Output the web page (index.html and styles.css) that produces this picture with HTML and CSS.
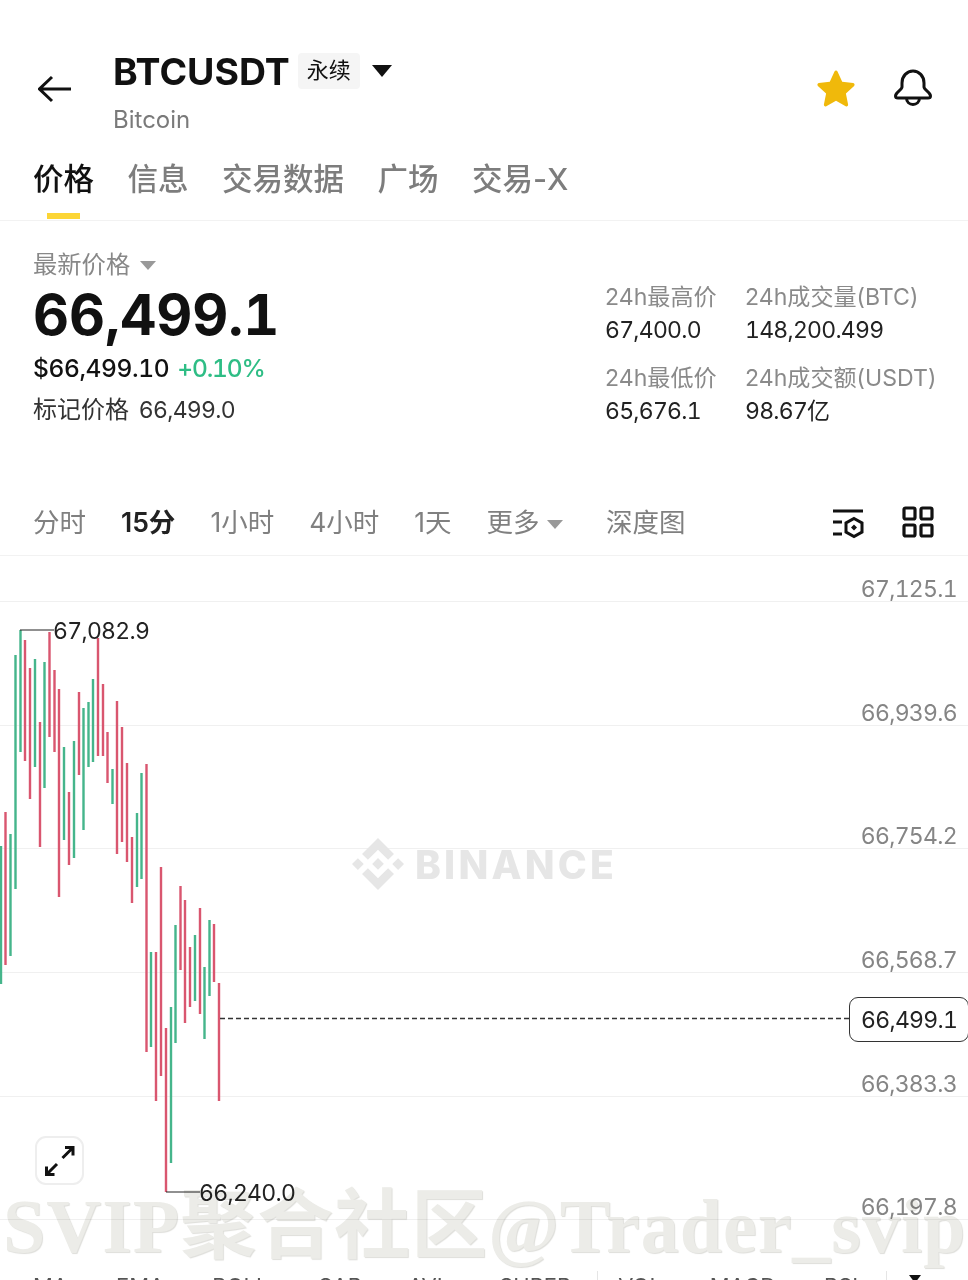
FILE: index.html
```html
<!DOCTYPE html>
<html lang="zh-CN">
<head>
    <meta charset="UTF-8">
    <meta name="viewport" content="width=device-width, initial-scale=1.0">
    <title>BTCUSDT 永续</title>
    <link rel="stylesheet" href="styles.css">
</head>
<body>
    <header class="top-bar">
        <svg class="back-icon" width="34" height="28" viewBox="0 0 34 28"><path d="M1.5 14H33M14 2 1.5 14 14 26"/></svg>
        <div class="symbol">
            <div class="symbol-row">
                <h1>BTCUSDT</h1>
                <span class="tag">永续</span>
                <span class="caret-big"></span>
            </div>
            <div class="symbol-name">Bitcoin</div>
        </div>
        <svg class="star-icon" width="40" height="38" viewBox="0 0 40 38"><path d="M20 1.5c.7 0 1.2.4 1.5 1l4.7 10.3 11 1.3c1.4.2 1.9 1.9.9 2.8l-8.2 7.6 2.2 11c.3 1.4-1.2 2.4-2.4 1.7L20 31.7l-9.7 5.5c-1.2.7-2.7-.3-2.4-1.7l2.2-11-8.2-7.6c-1-.9-.5-2.6.9-2.8l11-1.3 4.7-10.3c.3-.6.8-1 1.5-1z"/></svg>
        <svg class="bell-icon" width="38" height="38" viewBox="0 0 38 38"><path d="M8 18V14C8 7 13 2 19 2s11 5 11 12v4c0 3 6.5 5 6.5 9 0 1-1 2-2.5 2H4c-1.5 0-2.5-1-2.5-2 0-4 6.5-6 6.5-9zM12.500 29c0 4 3 6.5 6.5 6.5s6.5-2.5 6.5-6.5"/></svg>
    </header>

    <nav class="tabs">
        <a class="tab active">价格</a>
        <a class="tab">信息</a>
        <a class="tab">交易数据</a>
        <a class="tab">广场</a>
        <a class="tab">交易-X</a>
    </nav>

    <section class="stats">
        <div class="stats-left">
            <div class="latest-label">最新价格 <span class="caret"></span></div>
            <div class="price">66,499.1</div>
            <div class="price-sub">$66,499.10 <span class="up">+0.10%</span></div>
            <div class="mark">标记价格 <span>66,499.0</span></div>
        </div>
        <div class="stats-right">
            <div class="stat"><span>24h最高价</span><b>67,400.0</b></div>
            <div class="stat"><span>24h成交量(BTC)</span><b>148,200.499</b></div>
            <div class="stat"><span>24h最低价</span><b>65,676.1</b></div>
            <div class="stat"><span>24h成交额(USDT)</span><b>98.67亿</b></div>
        </div>
    </section>

    <div class="periods">
        <a class="period">分时</a>
        <a class="period active">15分</a>
        <a class="period">1小时</a>
        <a class="period">4小时</a>
        <a class="period">1天</a>
        <a class="period">更多 <span class="caret"></span></a>
        <a class="period depth">深度图</a>
        <svg class="opt-icon" width="32" height="36" viewBox="0 0 32 36"><path d="M0 4H30M0 15H9M0 27H9"/><path d="M21 11.5 29 16V25L21 29.5 13 25V16z"/><path class="dot" d="M21 17.5 24 20.5 21 23.5 18 20.5z"/></svg>
        <svg class="grid-icon" width="32" height="32" viewBox="0 0 32 32"><rect x="2" y="2" width="11" height="11" rx="1.5"/><rect x="19" y="2" width="11" height="11" rx="1.5"/><rect x="2" y="19" width="11" height="11" rx="1.5"/><rect x="19" y="19" width="11" height="11" rx="1.5"/></svg>
    </div>

    <section class="chart">
        <div class="axis-row first">67,125.1</div>
        <div class="axis-row">66,939.6</div>
        <div class="axis-row">66,754.2</div>
        <div class="axis-row">66,568.7</div>
        <div class="axis-row">66,383.3</div>
        <div class="axis-row">66,197.8</div>

        <div class="binance">
            <svg width="52" height="52" viewBox="0 0 126.61 126.61"><path d="M38.73 53.2 63.3 28.64l24.6 24.6 14.3-14.3L63.3 0 24.43 38.9zM0 63.31l14.3-14.3 14.3 14.3-14.3 14.3zM38.73 73.41 63.3 97.97l24.6-24.6 14.31 14.29-38.91 38.91-38.87-38.87zM98.01 63.31l14.3-14.3 14.3 14.3-14.3 14.3zM77.83 63.3 63.3 48.77 49.07 63.01l14.23 14.23 14.53-14.54z"/></svg>
            <span>BINANCE</span>
        </div>

        <svg class="candles" width="968" height="724" viewBox="0 556 968 724">
            <path class="wick green" d="M1 846V984M10.5 834V956M15.5 655V889M20.5 630V752M35 659V767M44.5 662V788M64 747V840M74 741V858M83.5 708V830M88.5 702V767M93 679V762M112.5 769V804M137 813V887M141.5 773V879M151 952V1047M171 1007V1163M175.5 925V1043M195 935V1001M204.5 967V1039M209.5 920V996"/>
            <path class="wick red" d="M5.5 812V965M25 640V761M30 668V799M40 722V847M49.5 632V737M54.5 670V752M59 689V897M69 792V865M79 692V775M98 638V756M103 684V756M107.5 732V783M117 701V854M122 727V842M127 763V862M132 837V903M146.5 764V1052M156 952V1101M161 867V1076M166 1028V1192M180.5 886V970M185 900V1023M190 947V1007M200 908V1014M214 924V982M219 983V1101"/>
            <path class="leader" d="M20 630H54M166 1192H200"/>
            <path class="last-line" d="M220 1018.5H849"/>
            <text x="53" y="639">67,082.9</text>
            <text x="199" y="1201">66,240.0</text>
        </svg>

        <div class="last-tag">66,499.1</div>
        <button class="expand">
            <svg width="30" height="30" viewBox="0 0 30 30"><path d="M17.5 12 28 1.5M20 1.5H28V9.5M12 18 1.5 28.5M1.5 20.5V28.5H9.5"/></svg>
        </button>

        <div class="indicators">
            <a class="ind i1">MA</a>
            <a class="ind i2">EMA</a>
            <a class="ind i3">BOLL</a>
            <a class="ind i4">SAR</a>
            <a class="ind i5">AVL</a>
            <a class="ind i6">SUPER</a>
            <i class="ind-sep s1"></i>
            <a class="ind i7">VOL</a>
            <a class="ind i8">MACD</a>
            <a class="ind i9">RSI</a>
            <i class="ind-sep s2"></i>
            <span class="ind-icon"></span>
        </div>
    </section>

    <div class="stamp">SVIP聚合社区@Trader_svip</div>
</body>
</html>
```

FILE: styles.css
```css
html, body {
    margin: 0;
    height: 1280px;
    overflow: hidden;
}
body {
    position: relative;
    background: #fff;
    color: #111;
    font-family: Inter, "Noto Sans CJK SC", sans-serif;
}
a {
    display: block;
}

/* top bar */
.top-bar {
    display: flex;
    align-items: flex-start;
    height: 149px;
}
.back-icon {
    flex: none;
    margin: 75px 0 0 38px;
    fill: none;
    stroke: #111;
    stroke-width: 3;
}
.symbol {
    flex: 1;
    margin: 49px 0 0 41px;
}
.symbol-row {
    display: flex;
    align-items: center;
    height: 44px;
}
.symbol-row h1 {
    margin: 0;
    font-size: 37.4px;
    font-weight: 700;
}
.tag {
    margin-left: 8px;
    padding: 0 9px;
    height: 36px;
    line-height: 35px;
    font-size: 22px;
    background: #f5f5f5;
    border-radius: 4px;
}
.caret-big {
    width: 0;
    height: 0;
    margin-left: 12px;
    border-left: 10px solid transparent;
    border-right: 10px solid transparent;
    border-top: 12px solid #111;
}
.symbol-name {
    margin-top: 12px;
    font-size: 24px;
    line-height: 30px;
    color: #7a7a7a;
}
.star-icon {
    flex: none;
    margin-top: 69px;
    fill: #f0b90b;
}
.bell-icon {
    flex: none;
    margin: 69px 36px 0 38px;
    fill: none;
    stroke: #111;
    stroke-width: 3;
}

/* tabs */
.tabs {
    display: flex;
    gap: 33.5px;
    height: 72px;
    padding-left: 33px;
    border-bottom: 1px solid #f2f2f2;
    box-sizing: border-box;
}
.tab {
    position: relative;
    font-size: 30.5px;
    line-height: 60px;
    color: #7d7d7d;
    font-weight: 500;
}
.tab.active {
    color: #111;
}
.tab.active::after {
    content: "";
    position: absolute;
    left: 14px;
    width: 33px;
    bottom: 1px;
    height: 6px;
    background: #fcd535;
}

/* price stats */
.stats {
    display: flex;
    justify-content: space-between;
    height: 260px;
    padding: 28px 0 0 33px;
    box-sizing: border-box;
}
.latest-label {
    font-size: 24.3px;
    line-height: 31px;
    color: #888;
}
.caret {
    display: inline-block;
    width: 0;
    height: 0;
    margin-left: 3px;
    vertical-align: 3px;
    border-left: 8px solid transparent;
    border-right: 8px solid transparent;
    border-top: 9px solid #999;
}
.price {
    margin-top: 2px;
    font-size: 55.8px;
    line-height: 66px;
    font-weight: 700;
    font-variant-numeric: tabular-nums;
}
.price-sub {
    margin-top: 3px;
    font-size: 24.5px;
    line-height: 34px;
    font-weight: 500;
    font-variant-numeric: tabular-nums;
    letter-spacing: -0.4px;
}
.up {
    margin-left: 2px;
    letter-spacing: -1.2px;
    color: #2ebd85;
}
.mark {
    margin-top: 9px;
    font-size: 24px;
    line-height: 32px;
    color: #333;
}
.mark span {
    margin-left: 3px;
    font-size: 23px;
    font-variant-numeric: tabular-nums;
    letter-spacing: -0.7px;
}
.stats-right {
    display: grid;
    grid-template-columns: 140px 223px;
    grid-auto-rows: 81px;
    margin-top: 32px;
}
.stat span {
    display: block;
    font-size: 23.1px;
    line-height: 32px;
    color: #8a8a8a;
}
.stat b {
    display: block;
    font-size: 23px;
    line-height: 34px;
    font-weight: 400;
    font-variant-numeric: tabular-nums;
    letter-spacing: -0.75px;
    color: #222;
}

/* period row */
.periods {
    display: flex;
    align-items: center;
    gap: 35px;
    height: 75px;
    padding: 4px 0 0 33px;
    border-bottom: 1px solid #f2f2f2;
    box-sizing: border-box;
    font-size: 26.5px;
    color: #808080;
}
.periods .active {
    color: #222;
    font-weight: 600;
}
.periods .caret {
    margin-left: 0;
}
.period {
    white-space: nowrap;
}
.period.depth {
    margin-left: 8px;
}
.opt-icon {
    margin: 10px 0 0 auto;
    fill: none;
    stroke: #111;
    stroke-width: 3;
}
.opt-icon .dot {
    fill: #111;
    stroke: none;
}
.grid-icon {
    margin: 4px 34px 0 2px;
    fill: none;
    stroke: #111;
    stroke-width: 3.2;
}

/* chart */
.chart {
    position: relative;
    height: 724px;
}
.axis-row {
    display: flex;
    align-items: flex-end;
    justify-content: flex-end;
    height: 123.7px;
    padding-right: 11px;
    border-bottom: 1px solid #f0f0f0;
    box-sizing: border-box;
    font-size: 23px;
    line-height: 23px;
    font-variant-numeric: tabular-nums;
    letter-spacing: -0.7px;
    color: #858585;
}
.axis-row.first {
    height: 46px;
}
.candles {
    position: absolute;
    top: 0;
    left: 0;
}
.candles text {
    font-size: 23px;
    font-variant-numeric: tabular-nums;
    letter-spacing: -0.7px;
    fill: #222;
}
.wick {
    fill: none;
    stroke-width: 2.4;
}
.wick.green {
    stroke: #45b58b;
}
.wick.red {
    stroke: #d9566f;
}
.leader {
    fill: none;
    stroke: #222;
    stroke-width: 1.2;
}
.last-line {
    fill: none;
    stroke: #333;
    stroke-width: 1.4;
    stroke-dasharray: 5 3;
}
.last-tag {
    position: absolute;
    top: 441px;
    right: -1px;
    width: 120px;
    height: 45px;
    padding-left: 11px;
    box-sizing: border-box;
    border: 1px solid #333;
    border-radius: 9px;
    background: #fff;
    font-size: 23px;
    line-height: 44px;
    font-variant-numeric: tabular-nums;
    letter-spacing: -0.7px;
    color: #222;
}
.expand {
    position: absolute;
    top: 580px;
    left: 35px;
    width: 49px;
    height: 49px;
    padding: 0;
    display: flex;
    align-items: center;
    justify-content: center;
    background: #fff;
    border: 2px solid #eee;
    border-radius: 11px;
}
.expand svg {
    fill: none;
    stroke: #111;
    stroke-width: 3;
}
.binance {
    position: absolute;
    top: 282px;
    left: 352px;
    display: flex;
    align-items: center;
    gap: 11px;
    color: #e6e6e6;
    fill: #e6e6e6;
}
.binance span {
    font-size: 39px;
    font-weight: 800;
    letter-spacing: 3.2px;
}

/* indicator tabs, cut off by the bottom of the window */
.indicators {
    position: absolute;
    top: 715px;
    left: 0;
    right: 0;
    display: flex;
    height: 30px;
    font-size: 22px;
    line-height: 30px;
    color: #555;
}
.ind {
    flex: none;
}
.i1 { margin-left: 33px; }
.i2 { margin-left: 48px; }
.i3 { margin-left: 48px; }
.i4 { margin-left: 50px; }
.i5 { margin-left: 46px; }
.i6 { margin-left: 50px; }
.i7 { margin-left: 20px; }
.i8 { margin-left: 48px; }
.i9 { margin-left: 48px; }
.ind-sep {
    flex: none;
    width: 1px;
    height: 30px;
    background: #e5e5e5;
}
.s1 { margin-left: 26px; }
.s2 { margin-left: 28px; }
.ind-icon {
    width: 0;
    height: 0;
    margin: 4px 0 0 22px;
    border-left: 6px solid transparent;
    border-right: 6px solid transparent;
    border-top: 8px solid #111;
}

/* watermark laid over the screenshot */
.stamp {
    position: absolute;
    top: 1181px;
    left: 3px;
    white-space: nowrap;
    font-family: "Liberation Serif", "Noto Sans CJK SC", serif;
    font-size: 76px;
    line-height: 90px;
    font-weight: 700;
    letter-spacing: 1px;
    color: #ecece8;
    text-shadow: 1px 1px 1px #dededa;
    mix-blend-mode: multiply;
}
```
